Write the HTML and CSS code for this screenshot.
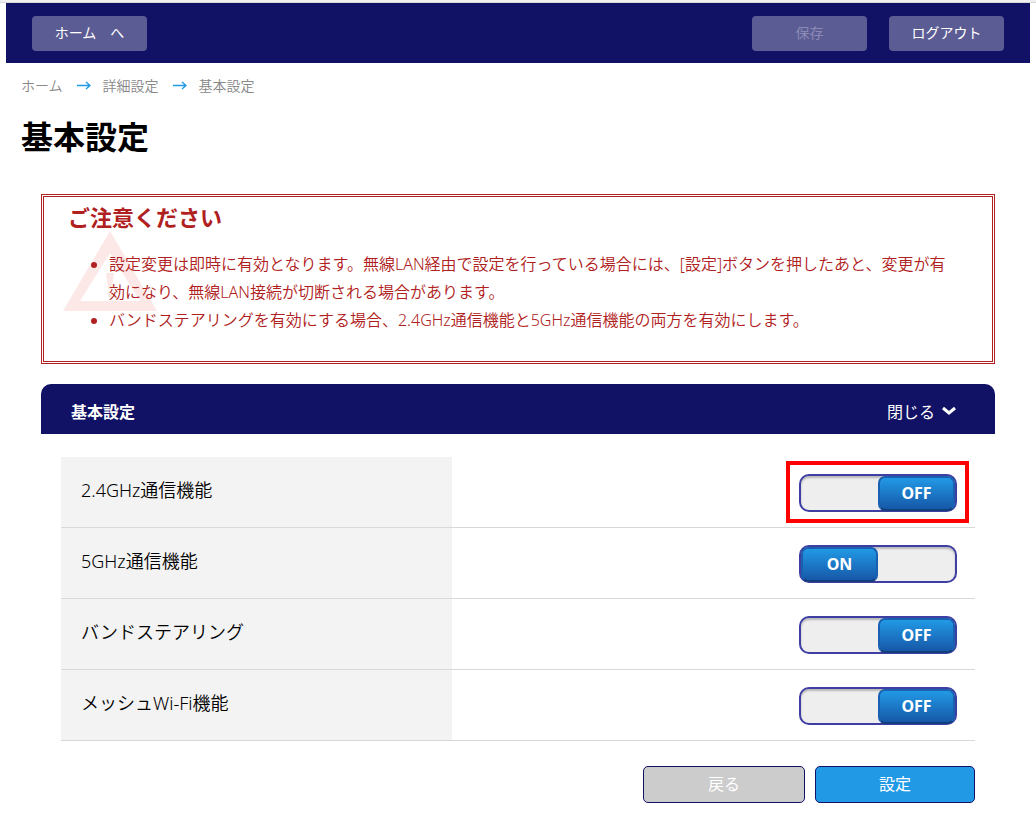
FILE: index.html
```html
<!DOCTYPE html>
<html lang="ja">
<head>
<meta charset="utf-8">
<meta name="viewport" content="width=device-width, initial-scale=1">
<title>基本設定</title>
<link rel="stylesheet" href="styles.css">
</head>
<body>
<div class="page">
  <header class="topbar">
    <button type="button" class="topbar-button topbar-home">ホーム　へ</button>
    <button type="button" class="topbar-button" disabled>保存</button>
    <button type="button" class="topbar-button">ログアウト</button>
  </header>

  <nav class="breadcrumb" aria-label="パンくず">
    <a href="#">ホーム</a>
    <svg class="crumb-arrow" viewBox="0 0 14 10" aria-hidden="true"><path d="M0 4.5H13M9 1L13 4.5L9 8"/></svg>
    <a href="#">詳細設定</a>
    <svg class="crumb-arrow" viewBox="0 0 14 10" aria-hidden="true"><path d="M0 4.5H13M9 1L13 4.5L9 8"/></svg>
    <a href="#">基本設定</a>
  </nav>

  <h1 class="title">基本設定</h1>

  <main class="content">
    <section class="notice">
      <svg class="notice-mark" viewBox="0 0 94 80" aria-hidden="true">
        <path fill-rule="evenodd" d="M47 0L94 80H0ZM47 22L17 70H77ZM43 42H51L49 58H45ZM45 61H49V66H45Z"/>
      </svg>
      <h2 class="notice-title">ご注意ください</h2>
      <ul class="notice-list">
        <li>設定変更は即時に有効となります。無線LAN経由で設定を行っている場合には、[設定]ボタンを押したあと、変更が有効になり、無線LAN接続が切断される場合があります。</li>
        <li>バンドステアリングを有効にする場合、2.4GHz通信機能と5GHz通信機能の両方を有効にします。</li>
      </ul>
    </section>

    <section class="panel">
      <div class="panel-head">
        <h2 class="panel-title">基本設定</h2>
        <button type="button" class="panel-toggle">閉じる
          <svg class="chevron" viewBox="0 0 16 10" aria-hidden="true"><path d="M2 2L8 7L14 2"/></svg>
        </button>
      </div>
      <form class="panel-body">
        <table class="settings">
          <tr>
            <th scope="row"><label for="wifi24">2.4GHz通信機能</label></th>
            <td><div class="switch highlighted"><input type="checkbox" id="wifi24"><span class="knob" aria-hidden="true">OFF</span></div></td>
          </tr>
          <tr>
            <th scope="row"><label for="wifi5">5GHz通信機能</label></th>
            <td><div class="switch"><input type="checkbox" id="wifi5" checked><span class="knob" aria-hidden="true">ON</span></div></td>
          </tr>
          <tr>
            <th scope="row"><label for="band">バンドステアリング</label></th>
            <td><div class="switch"><input type="checkbox" id="band"><span class="knob" aria-hidden="true">OFF</span></div></td>
          </tr>
          <tr>
            <th scope="row"><label for="mesh">メッシュWi-Fi機能</label></th>
            <td><div class="switch"><input type="checkbox" id="mesh"><span class="knob" aria-hidden="true">OFF</span></div></td>
          </tr>
        </table>
        <div class="actions">
          <button type="button" class="action action-back">戻る</button>
          <button type="submit" class="action action-set">設定</button>
        </div>
      </form>
    </section>
  </main>
</div>
</body>
</html>
```
FILE: styles.css
```css
* {
  box-sizing: border-box;
}

body {
  margin: 0;
  border-top: 2px solid #f0f0f0;
  background: #fff;
  color: #000;
  font-family: "Noto Sans", "Noto Sans CJK JP", sans-serif;
  font-size: 16px;
  font-weight: 350;
}

button {
  font: inherit;
  cursor: pointer;
}

.page {
  padding: 0 6px 24px;
  border-top: 1px solid #d8d8d8;
}

.topbar {
  display: flex;
  align-items: center;
  gap: 22px;
  height: 60px;
  padding: 0 26px;
  background: #111166;
}

.topbar-button {
  width: 115px;
  height: 35px;
  padding: 0 0 2px;
  border: 0;
  border-radius: 4px;
  background: #5c5c95;
  color: #fff;
  font-size: 14px;
  font-weight: 400;
}

.topbar-button:disabled {
  color: #8a8ab4;
}

.topbar-home {
  margin-right: auto;
}

.breadcrumb {
  display: flex;
  align-items: center;
  gap: 14px;
  padding: 12px 15px 0;
  font-size: 14px;
  line-height: 22px;
}

.breadcrumb a {
  color: #888;
  text-decoration: none;
}

.crumb-arrow {
  width: 14px;
  height: 10px;
  margin-right: -2px;
  fill: none;
  stroke: #2299e5;
  stroke-width: 1.4;
}

.title {
  margin: 15px 15px 33px;
  font-size: 32px;
  font-weight: 700;
  line-height: 49px;
}

.content {
  padding: 0 35px;
}

.notice {
  position: relative;
  min-height: 170px;
  padding: 3px 32px 26px 24px;
  border: 3px double #b02020;
  color: #b02020;
}

.notice-mark {
  position: absolute;
  top: 34px;
  left: 19px;
  width: 94px;
  height: 80px;
  fill: #fde8e8;
}

.notice-title {
  position: relative;
  margin: 0 0 16px;
  font-size: 22px;
  font-weight: 700;
  line-height: 34px;
}

.notice-list {
  position: relative;
  margin: 0;
  padding-left: 41px;
  line-height: 28px;
}

.panel {
  margin-top: 20px;
}

.panel-head {
  display: flex;
  align-items: center;
  justify-content: space-between;
  height: 50px;
  padding: 4px 38px 0 30px;
  border-radius: 10px 10px 0 0;
  background: #111166;
  color: #fff;
}

.panel-title {
  margin: 0;
  font-size: 16px;
  font-weight: 700;
}

.panel-toggle {
  display: flex;
  align-items: center;
  gap: 6px;
  padding: 0;
  border: 0;
  background: none;
  color: #fff;
  font-weight: 400;
}

.chevron {
  width: 16px;
  height: 10px;
  fill: none;
  stroke: #fff;
  stroke-width: 3;
}

.panel-body {
  padding: 23px 20px 0;
}

.settings {
  width: 100%;
  border-collapse: separate;
  border-spacing: 0;
}

.settings th,
.settings td {
  height: 71px;
  border-bottom: 1px solid #d8d8d8;
}

.settings th {
  width: 391px;
  padding: 0 20px 6px;
  background: #f3f3f3;
  font-size: 18px;
  font-weight: 350;
  text-align: left;
}

.settings td {
  padding: 2px 18px 0;
}

.switch {
  position: relative;
  display: grid;
  grid-template-columns: 1fr 1fr;
  width: 158px;
  height: 38px;
  margin-left: auto;
  border: 2px solid #3e3ea3;
  border-radius: 10px;
  background: #eee;
  box-shadow: inset 0 2px 2px #b8b8b8;
}

.switch input {
  grid-area: 1 / 1 / 2 / 3;
  width: 100%;
  height: 100%;
  margin: 0;
  appearance: none;
  cursor: pointer;
}

.knob {
  grid-area: 1 / 2;
  border: 2px solid #1960b0;
  border-bottom-color: #123f7c;
  border-radius: 7px;
  background: linear-gradient(#2299e5, #1658a8);
  color: #fff;
  font-size: 16px;
  font-weight: 700;
  line-height: 31px;
  text-align: center;
  pointer-events: none;
}

.switch input:checked + .knob {
  grid-area: 1 / 1;
}

.highlighted::after {
  content: "";
  position: absolute;
  inset: -15px -14px -13px -15px;
  border: 4px solid #f00;
  pointer-events: none;
}

.actions {
  display: flex;
  justify-content: flex-end;
  gap: 10px;
  margin-top: 25px;
}

.action {
  width: 160px;
  height: 37px;
  padding: 0 0 4px;
  border: 1px solid #111166;
  border-radius: 5px;
  color: #fff;
  font-weight: 400;
}

.action-back {
  width: 162px;
  background: #ccc;
}

.action-set {
  background: #2299e5;
}
```
